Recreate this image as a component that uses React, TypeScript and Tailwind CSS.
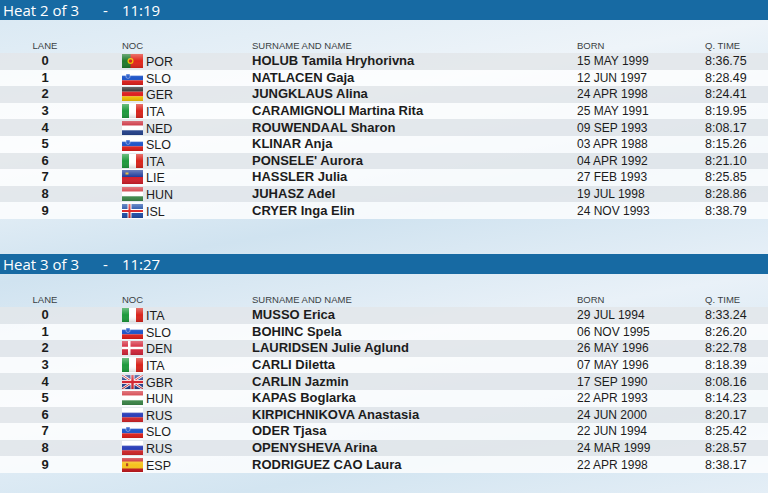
import React from 'react'

type Entry = { lane: number; noc: string; name: string; born: string; time: string }

const heats: Array<{ title: string; time: string; entries: Entry[] }> = [
  {
    title: 'Heat 2 of 3',
    time: '11:19',
    entries: [
      { lane: 0, noc: 'POR', name: 'HOLUB Tamila Hryhorivna', born: '15 MAY 1999', time: '8:36.75' },
      { lane: 1, noc: 'SLO', name: 'NATLACEN Gaja', born: '12 JUN 1997', time: '8:28.49' },
      { lane: 2, noc: 'GER', name: 'JUNGKLAUS Alina', born: '24 APR 1998', time: '8:24.41' },
      { lane: 3, noc: 'ITA', name: 'CARAMIGNOLI Martina Rita', born: '25 MAY 1991', time: '8:19.95' },
      { lane: 4, noc: 'NED', name: 'ROUWENDAAL Sharon', born: '09 SEP 1993', time: '8:08.17' },
      { lane: 5, noc: 'SLO', name: 'KLINAR Anja', born: '03 APR 1988', time: '8:15.26' },
      { lane: 6, noc: 'ITA', name: "PONSELE' Aurora", born: '04 APR 1992', time: '8:21.10' },
      { lane: 7, noc: 'LIE', name: 'HASSLER Julia', born: '27 FEB 1993', time: '8:25.85' },
      { lane: 8, noc: 'HUN', name: 'JUHASZ Adel', born: '19 JUL 1998', time: '8:28.86' },
      { lane: 9, noc: 'ISL', name: 'CRYER Inga Elin', born: '24 NOV 1993', time: '8:38.79' },
    ],
  },
  {
    title: 'Heat 3 of 3',
    time: '11:27',
    entries: [
      { lane: 0, noc: 'ITA', name: 'MUSSO Erica', born: '29 JUL 1994', time: '8:33.24' },
      { lane: 1, noc: 'SLO', name: 'BOHINC Spela', born: '06 NOV 1995', time: '8:26.20' },
      { lane: 2, noc: 'DEN', name: 'LAURIDSEN Julie Aglund', born: '26 MAY 1996', time: '8:22.78' },
      { lane: 3, noc: 'ITA', name: 'CARLI Diletta', born: '07 MAY 1996', time: '8:18.39' },
      { lane: 4, noc: 'GBR', name: 'CARLIN Jazmin', born: '17 SEP 1990', time: '8:08.16' },
      { lane: 5, noc: 'HUN', name: 'KAPAS Boglarka', born: '22 APR 1993', time: '8:14.23' },
      { lane: 6, noc: 'RUS', name: 'KIRPICHNIKOVA Anastasia', born: '24 JUN 2000', time: '8:20.17' },
      { lane: 7, noc: 'SLO', name: 'ODER Tjasa', born: '22 JUN 1994', time: '8:25.42' },
      { lane: 8, noc: 'RUS', name: 'OPENYSHEVA Arina', born: '24 MAR 1999', time: '8:28.57' },
      { lane: 9, noc: 'ESP', name: 'RODRIGUEZ CAO Laura', born: '22 APR 1998', time: '8:38.17' },
    ],
  },
]

// horizontal / vertical stripe helpers for the flags
function HStripes({ colors }: { colors: string[] }) {
  const h = 14 / colors.length
  return (
    <>
      {colors.map((c, i) => (
        <rect key={i} x="0" y={i * h} width="21" height={h} fill={c} />
      ))}
    </>
  )
}

function VStripes({ colors }: { colors: string[] }) {
  const w = 21 / colors.length
  return (
    <>
      {colors.map((c, i) => (
        <rect key={i} x={i * w} y="0" width={w} height="14" fill={c} />
      ))}
    </>
  )
}

function FlagShapes({ noc }: { noc: string }) {
  switch (noc) {
    case 'POR':
      return (
        <>
          <rect width="21" height="14" fill="#e1261c" />
          <rect width="8.5" height="14" fill="#1f7a2c" />
          <circle cx="8.5" cy="7" r="3" fill="#f2c400" />
          <circle cx="8.5" cy="7" r="1.8" fill="#d3261c" />
        </>
      )
    case 'SLO':
      return (
        <>
          <HStripes colors={['#ffffff', '#1f55c8', '#e3201b']} />
          <path d="M4 3 h4 v3.5 q-2 2 -4 0 z" fill="#1f55c8" stroke="#ffffff" strokeWidth="0.4" />
        </>
      )
    case 'GER':
      return <HStripes colors={['#1a1a1a', '#dd1f1f', '#f7c600']} />
    case 'ITA':
      return <VStripes colors={['#1d9a3c', '#ffffff', '#d9251d']} />
    case 'NED':
      return <HStripes colors={['#c8202f', '#ffffff', '#26448f']} />
    case 'LIE':
      return (
        <>
          <HStripes colors={['#1f3c9a', '#d21f2b']} />
          <rect x="3.5" y="2.5" width="3" height="2" fill="#e0b020" />
        </>
      )
    case 'HUN':
      return <HStripes colors={['#d2343d', '#ffffff', '#3d8a4a']} />
    case 'ISL':
      return (
        <>
          <rect width="21" height="14" fill="#1f4fa8" />
          <rect x="5.5" y="0" width="4" height="14" fill="#ffffff" />
          <rect x="0" y="5" width="21" height="4" fill="#ffffff" />
          <rect x="6.5" y="0" width="2" height="14" fill="#dc2a2a" />
          <rect x="0" y="6" width="21" height="2" fill="#dc2a2a" />
        </>
      )
    case 'DEN':
      return (
        <>
          <rect width="21" height="14" fill="#d3263a" />
          <rect x="6" y="0" width="2.5" height="14" fill="#ffffff" />
          <rect x="0" y="5.75" width="21" height="2.5" fill="#ffffff" />
        </>
      )
    case 'GBR':
      return (
        <>
          <rect width="21" height="14" fill="#243f8c" />
          <path d="M0 0 L21 14 M21 0 L0 14" stroke="#ffffff" strokeWidth="2.6" />
          <path d="M0 0 L21 14 M21 0 L0 14" stroke="#d22530" strokeWidth="1" />
          <rect x="8.5" y="0" width="4" height="14" fill="#ffffff" />
          <rect x="0" y="5" width="21" height="4" fill="#ffffff" />
          <rect x="9.3" y="0" width="2.4" height="14" fill="#d22530" />
          <rect x="0" y="5.8" width="21" height="2.4" fill="#d22530" />
        </>
      )
    case 'RUS':
      return <HStripes colors={['#ffffff', '#2b3fb8', '#d6262a']} />
    case 'ESP':
      return (
        <>
          <rect width="21" height="14" fill="#c8191e" />
          <rect x="0" y="3.5" width="21" height="7" fill="#f6c31c" />
          <rect x="4" y="5.2" width="2.2" height="3" fill="#b5431c" />
        </>
      )
    default:
      return <rect width="21" height="14" fill="#999" />
  }
}

function Flag({ noc }: { noc: string }) {
  return (
    <svg width="21" height="14" viewBox="0 0 21 14" className="shrink-0">
      <defs>
        <linearGradient id="gloss" x1="0" y1="0" x2="0" y2="1">
          <stop offset="0" stopColor="#ffffff" stopOpacity="0.35" />
          <stop offset="0.5" stopColor="#ffffff" stopOpacity="0" />
          <stop offset="1" stopColor="#000000" stopOpacity="0.15" />
        </linearGradient>
      </defs>
      <FlagShapes noc={noc} />
      <rect width="21" height="14" fill="url(#gloss)" />
    </svg>
  )
}

function HeatBlock({ title, time, entries }: { title: string; time: string; entries: Entry[] }) {
  return (
    <div>
      <div
        className="h-[20px] bg-[#176aa3] text-white text-[15px] leading-[20px] pl-[3px] flex items-center"
        style={{ fontFamily: '"Open Sans", "DejaVu Sans", sans-serif' }}
      >
        <span>{title}</span>
        <span className="ml-[24px]">-</span>
        <span className="ml-[14px]">{time}</span>
      </div>

      <div className="h-[33px] flex items-end pb-[1px] text-[9.5px] text-[#3a3f44] leading-[12px]">
        <div className="w-[90px] text-center">LANE</div>
        <div className="w-[32px]" />
        <div className="w-[130px]">NOC</div>
        <div className="w-[325px]">SURNAME AND NAME</div>
        <div className="w-[128px]">BORN</div>
        <div className="flex-1">Q. TIME</div>
      </div>

      {entries.map((e, i) => (
        <div
          key={e.lane}
          className={`h-[16.6px] flex items-center text-[12.5px] leading-[14px] text-[#1c1c1c] ${
            i % 2 === 0 ? 'bg-[#e3e6ea]/85' : 'bg-white/80'
          }`}
        >
          <div className="w-[90px] text-center font-bold text-[13px]">{e.lane}</div>
          <div className="w-[32px]" />
          <div className="w-[130px] flex items-center">
            <Flag noc={e.noc} />
            <span className="ml-[3px] pt-[2px]">{e.noc}</span>
          </div>
          <div className="w-[325px] font-bold text-[13px]">{e.name}</div>
          <div className="w-[128px] text-[12px]">{e.born}</div>
          <div className="flex-1 text-[12.5px]">{e.time}</div>
        </div>
      ))}
    </div>
  )
}

export default function App() {
  return (
    <div
      className="w-[768px] h-[493px] overflow-hidden bg-[linear-gradient(170deg,#d8e8f3_0%,#eef4f9_25%,#d0e3f0_45%,#e9f1f8_65%,#d3e5f1_85%,#e4eef6_100%)]"
      style={{ fontFamily: '"Liberation Sans", Arial, sans-serif' }}
    >
      <HeatBlock {...heats[0]} />
      <div className="h-[35px]" />
      <HeatBlock {...heats[1]} />
    </div>
  )
}
